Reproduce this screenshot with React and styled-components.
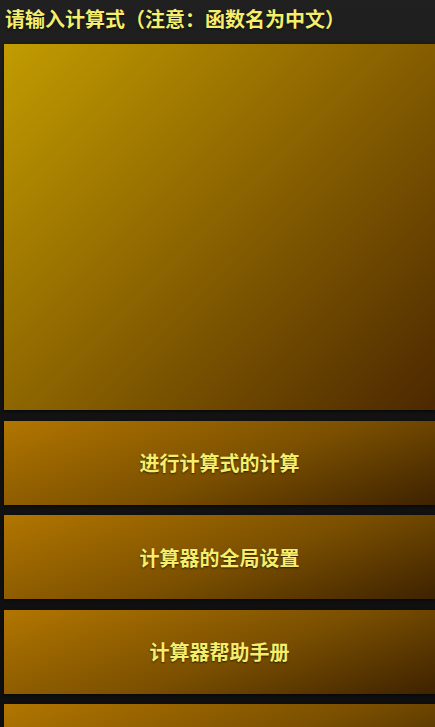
import React from "react"
import styled, { createGlobalStyle } from "styled-components"

const GlobalStyle = createGlobalStyle`
  html, body {
    margin: 0;
    padding: 0;
    height: 100%;
    background: #151515;
    overflow: hidden;
  }
  #root {
    height: 100%;
  }
`

// the last button is only partly visible at the bottom of the screen
const buttons = ["进行计算式的计算", "计算器的全局设置", "计算器帮助手册", ""]

const App = () => {
  return (
    <Page>
      <GlobalStyle />
      <Title>请输入计算式（注意：函数名为中文）</Title>
      <Input spellCheck={false} />
      {buttons.map((label, i) => (
        <ActionButton key={i}>{label}</ActionButton>
      ))}
    </Page>
  )
}

export default App

export const Page = styled.div`
  height: 100%;
  display: flex;
  flex-direction: column;
  padding-left: 4px;
  background: linear-gradient(180deg, #202020 0%, #141414 40%, #0f0f0f 100%);
  font-family: "Noto Sans CJK SC", "Noto Sans", sans-serif;
  box-sizing: border-box;
`

export const Title = styled.div`
  flex: none;
  height: 44px;
  padding: 4px 0 0 1px;
  box-sizing: border-box;
  color: #f4ee6c;
  font-size: 20px;
  font-weight: 700;
  line-height: 30px;
  white-space: nowrap;
  text-shadow: 0 1px 2px rgba(0, 0, 0, 0.6);
`

export const Input = styled.textarea`
  flex: none;
  height: 366px;
  width: 100%;
  margin: 0;
  border: none;
  outline: none;
  resize: none;
  box-sizing: border-box;
  background: linear-gradient(135deg, #c29c00 0%, #8a6200 50%, #4c2800 100%);
  box-shadow: 0 1px 3px rgba(0, 0, 0, 0.7);
  color: #f4ee6c;
  font: inherit;
`

export const ActionButton = styled.button`
  flex: none;
  height: 84px;
  width: 100%;
  margin: 10.5px 0 0;
  border: none;
  padding: 0;
  background: linear-gradient(160deg, #b27600 0%, #7a4f00 55%, #3e2200 100%);
  box-shadow: 0 1px 3px rgba(0, 0, 0, 0.7);
  color: #f4ee6c;
  font-family: inherit;
  font-size: 20px;
  font-weight: 700;
  text-shadow: 0 1px 2px rgba(0, 0, 0, 0.6);
  cursor: pointer;
`
